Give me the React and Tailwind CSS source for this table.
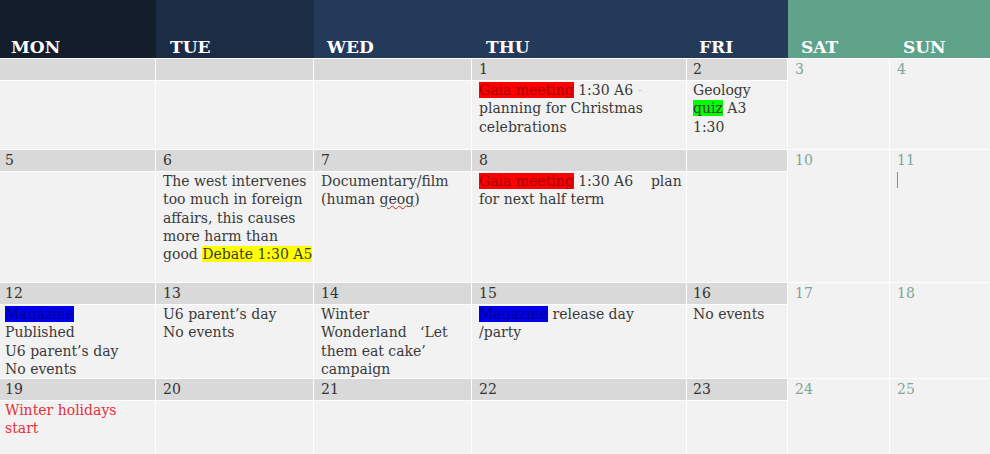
import React from 'react';

// column widths (px) for the body grid, a 1px white gap sits between them
const colW = ['w-[155px]', 'w-[157px]', 'w-[157px]', 'w-[214px]', 'w-[100px]', 'w-[101px]', 'w-[100px]'];
const colPad = ['pl-[5px]', 'pl-[7px]', 'pl-[7px]', 'pl-[7px]', 'pl-[6px]', 'pl-[7px]', 'pl-[7px]'];

const headers = [
  { label: 'MON', cls: 'w-[156px] bg-[#131d2b] pl-[11px]' },
  { label: 'TUE', cls: 'w-[158px] bg-[#1c2c45] pl-[14px]' },
  { label: 'WED', cls: 'w-[158px] bg-[#243a59] pl-[13px]' },
  { label: 'THU', cls: 'w-[215px] bg-[#243a59] pl-[14px]' },
  { label: 'FRI', cls: 'w-[101px] bg-[#243a59] pl-[12px]' },
  { label: 'SAT', cls: 'w-[102px] bg-[#5fa48a] pl-[13px]' },
  { label: 'SUN', cls: 'w-[100px] bg-[#5fa48a] pl-[13px]' },
];

const Gaia = () => <span className="bg-[#ff0000] text-[#a30000]">Gaia meeting</span>;
const Magazine = () => <span className="bg-[#0000ee] text-[#00008a]">Magazine</span>;

const DayCell = ({ col, num, children }) => (
  <div className={`${colW[col]} flex flex-col gap-px`}>
    <div className={`h-[21px] shrink-0 bg-[#d9d9d9] ${colPad[col]} leading-[20px] text-[#333]`}>
      {num}
    </div>
    <div className={`flex-1 bg-[#f2f2f2] ${colPad[col]} text-[#3a3a3a] whitespace-nowrap`}>
      {children}
    </div>
  </div>
);

const WeekendCell = ({ col, num, children }) => (
  <div className={`${colW[col]} bg-[#f2f2f2] ${colPad[col]} text-[#7fa596]`}>
    <div className="h-[21px] leading-[20px]">{num}</div>
    {children}
  </div>
);

const Week = ({ h, children }) => <div className={`flex gap-px ${h}`}>{children}</div>;

export default function App() {
  return (
    <div className="w-[990px] h-[454px] overflow-hidden bg-white font-['DejaVu_Serif',serif] text-[14px] leading-[18.3px]">
      <div className="flex h-[58px]">
        {headers.map((hd) => (
          <div key={hd.label} className={`${hd.cls} flex items-end pb-[2px]`}>
            <span className="font-bold text-[17px] leading-none text-white">
              {hd.label}
            </span>
          </div>
        ))}
      </div>

      <div className="flex flex-col gap-px pt-px">
        <Week h="h-[90px]">
          <DayCell col={0} />
          <DayCell col={1} />
          <DayCell col={2} />
          <DayCell col={3} num="1">
            <div>
              <Gaia /> 1:30 A6 <span className="text-[#cfcfcf]">-</span>
            </div>
            <div>planning for Christmas</div>
            <div>celebrations</div>
          </DayCell>
          <DayCell col={4} num="2">
            <div>Geology</div>
            <div>
              <span className="bg-[#00ff00]">quiz</span> A3
            </div>
            <div>1:30</div>
          </DayCell>
          <WeekendCell col={5} num="3" />
          <WeekendCell col={6} num="4" />
        </Week>

        <Week h="h-[132px]">
          <DayCell col={0} num="5" />
          <DayCell col={1} num="6">
            <div>The west intervenes</div>
            <div>too much in foreign</div>
            <div>affairs, this causes</div>
            <div>more harm than</div>
            <div>
              good <span className="bg-[#ffff00]">Debate 1:30 A5</span>
            </div>
          </DayCell>
          <DayCell col={2} num="7">
            <div>Documentary/film</div>
            <div>
              (human <span className="underline decoration-wavy decoration-[#d42020] decoration-1">geog</span>)
            </div>
          </DayCell>
          <DayCell col={3} num="8">
            <div className="whitespace-pre">
              <Gaia />{' 1:30 A6    plan'}
            </div>
            <div>for next half term</div>
          </DayCell>
          <DayCell col={4} />
          <WeekendCell col={5} num="10" />
          <WeekendCell col={6} num="11">
            <div className="w-px h-[16px] bg-[#5f9f8f] mt-px" />
          </WeekendCell>
        </Week>

        <Week h="h-[95px]">
          <DayCell col={0} num="12">
            <div>
              <Magazine />
            </div>
            <div>Published</div>
            <div>U6 parent’s day</div>
            <div>No events</div>
          </DayCell>
          <DayCell col={1} num="13">
            <div>U6 parent’s day</div>
            <div>No events</div>
          </DayCell>
          <DayCell col={2} num="14">
            <div>Winter</div>
            <div className="whitespace-pre">{'Wonderland   ‘Let'}</div>
            <div>them eat cake’</div>
            <div>campaign</div>
          </DayCell>
          <DayCell col={3} num="15">
            <div>
              <Magazine /> release day
            </div>
            <div>/party</div>
          </DayCell>
          <DayCell col={4} num="16">
            <div>No events</div>
          </DayCell>
          <WeekendCell col={5} num="17" />
          <WeekendCell col={6} num="18" />
        </Week>

        <Week h="h-[80px]">
          <DayCell col={0} num="19">
            <div className="text-[#e5303c]">Winter holidays</div>
            <div className="text-[#e5303c]">start</div>
          </DayCell>
          <DayCell col={1} num="20" />
          <DayCell col={2} num="21" />
          <DayCell col={3} num="22" />
          <DayCell col={4} num="23" />
          <WeekendCell col={5} num="24" />
          <WeekendCell col={6} num="25" />
        </Week>
      </div>
    </div>
  );
}
